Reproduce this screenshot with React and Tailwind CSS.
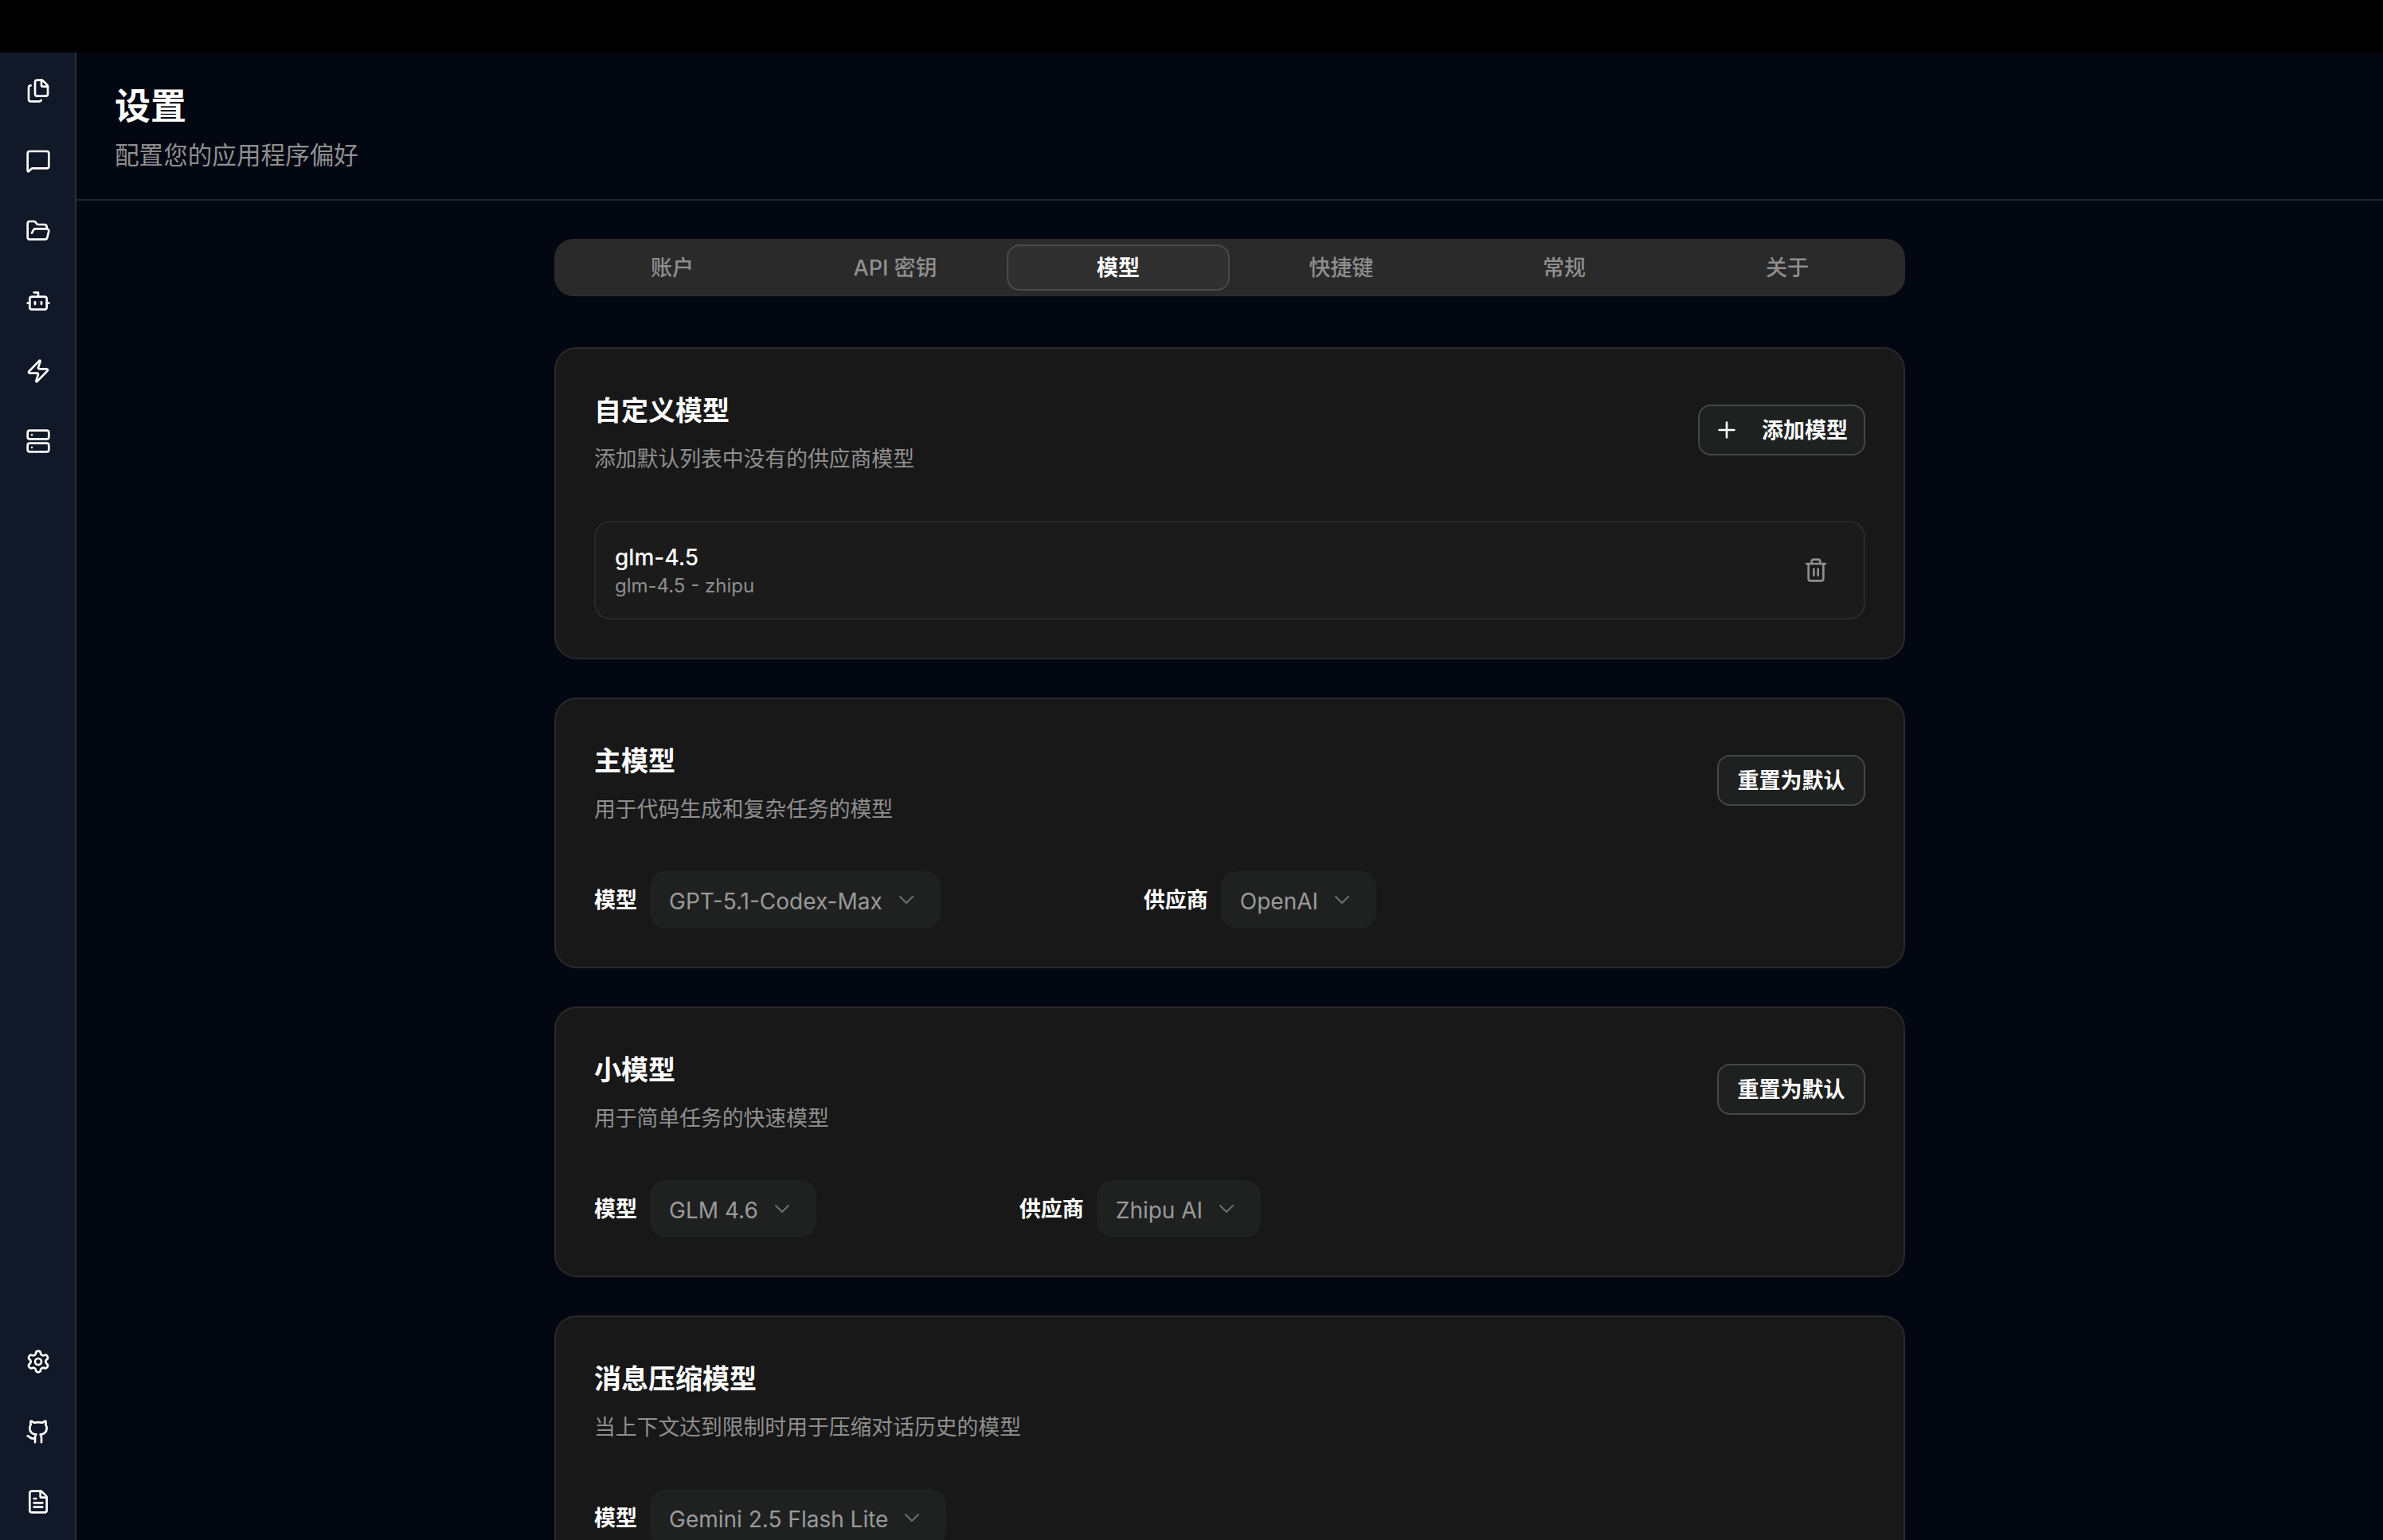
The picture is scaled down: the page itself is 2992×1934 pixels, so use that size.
import { Bot, ChevronDown, FileText, Files, FolderOpen, Github, MessageSquare, Plus, Server, Settings, Trash2, Zap } from 'lucide-react'

const topNav = [Files, MessageSquare, FolderOpen, Bot, Zap, Server]
const bottomNav = [Settings, Github, FileText]
const tabs = ['账户', 'API 密钥', '模型', '快捷键', '常规', '关于']

function NavIcon({ icon: Icon }) {
  return (
    <button className="flex h-[88px] w-full items-center justify-center text-white">
      <Icon size={32} />
    </button>
  )
}

function SelectBox({ value }) {
  return (
    <button className="flex h-[72px] items-center gap-[14px] rounded-[20px] bg-[#1f2121] pl-[24px] pr-[27px] text-[28px] text-[#9a9a9a]">
      <span className="pt-[3px]">{value}</span>
      <ChevronDown size={32} className="text-[#6f6f6f]" strokeWidth={1.5} />
    </button>
  )
}

function Field({ label, value }) {
  return (
    <div className="flex items-center gap-[16px]">
      <span className="pt-[3px] text-[27px] font-semibold text-white">{label}</span>
      <SelectBox value={value} />
    </div>
  )
}

function CardHeader({ title, desc, children }) {
  return (
    <div className="flex items-center justify-between">
      <div>
        <h2 className="pt-[4px] text-[34px] leading-[52px] font-semibold text-white">{title}</h2>
        <p className="mt-[12px] pt-[4px] text-[26.8px] leading-[36px] text-[#8f8f8f]">{desc}</p>
      </div>
      {children}
    </div>
  )
}

function ModelCard({ title, desc, model, provider, reset = true }) {
  return (
    <section className="rounded-[28px] border-2 border-[#2a2a2a] bg-[#181818] p-[48px]">
      <CardHeader title={title} desc={desc}>
        {reset && (
          <button className="h-[64px] w-[186px] rounded-[16px] border-2 border-[#454747] bg-[#1f2121] pt-[2px] text-[27px] font-semibold text-white">
            重置为默认
          </button>
        )}
      </CardHeader>
      <div className="mt-[60px] flex gap-[255px]">
        <Field label="模型" value={model} />
        {provider && <Field label="供应商" value={provider} />}
      </div>
    </section>
  )
}

export default function App() {
  return (
    <div className="flex h-[1934px] w-[2992px] flex-col overflow-hidden bg-black font-['Inter','Noto_Sans_CJK_SC',sans-serif]">
      <div className="h-[66px] shrink-0 bg-black" />
      <div className="flex min-h-0 flex-1">
        <aside className="flex w-[96px] shrink-0 flex-col justify-between border-r-2 border-[#2b2f36] bg-[#111827] py-[4px] pl-[2px]">
          <div>
            {topNav.map((icon, i) => <NavIcon key={i} icon={icon} />)}
          </div>
          <div>
            {bottomNav.map((icon, i) => <NavIcon key={i} icon={icon} />)}
          </div>
        </aside>

        <main className="min-w-0 flex-1 bg-[#030712]">
          <header className="border-b-2 border-[#23252b] px-[48px] pt-[34px] pb-[33px]">
            <h1 className="pt-[4px] text-[45px] leading-[60px] font-bold text-white">设置</h1>
            <p className="mt-[9px] text-[30.6px] leading-[44px] text-[#8f8f8f]">配置您的应用程序偏好</p>
          </header>

          <div className="mx-auto w-[1696px] pt-[48px]">
            {/* Tabs */}
            <div className="grid h-[72px] grid-cols-6 rounded-[24px] bg-[#2a2a2a] p-[7px_8px]">
              {tabs.map((tab) => (
                <div
                  key={tab}
                  className={
                    tab === '模型'
                      ? 'flex items-center justify-center rounded-[16px] border-2 border-[#4a4a4a] bg-[#303030] pt-[3px] text-[27px] font-semibold text-white'
                      : 'flex items-center justify-center pt-[3px] text-[27px] font-medium text-[#8f8f8f]'
                  }
                >
                  {tab}
                </div>
              ))}
            </div>

            <div className="mt-[64px] flex flex-col gap-[48px]">
              <section className="rounded-[28px] border-2 border-[#2a2a2a] bg-[#181818] p-[48px]">
                <CardHeader title="自定义模型" desc="添加默认列表中没有的供应商模型">
                  <button className="flex h-[64px] w-[210px] items-center gap-[28px] rounded-[16px] border-2 border-[#454747] bg-[#1f2121] pl-[18px] text-[27px] font-semibold text-white">
                    <Plus size={32} />
                    <span className="pt-[2px]">添加模型</span>
                  </button>
                </CardHeader>
                <div className="mt-[60px] flex items-center justify-between rounded-[20px] border-2 border-[#2a2a2a] bg-[#1b1b1b] py-[24px] pr-[44px] pl-[24px]">
                  <div>
                    <p className="text-[28px] leading-[40px] font-medium text-white">glm-4.5</p>
                    <p className="text-[24px] leading-[32px] text-[#8f8f8f]">glm-4.5 - zhipu</p>
                  </div>
                  <Trash2 size={32} className="text-[#8f8f8f]" />
                </div>
              </section>

              <ModelCard title="主模型" desc="用于代码生成和复杂任务的模型" model="GPT-5.1-Codex-Max" provider="OpenAI" />
              <ModelCard title="小模型" desc="用于简单任务的快速模型" model="GLM 4.6" provider="Zhipu AI" />
              <ModelCard title="消息压缩模型" desc="当上下文达到限制时用于压缩对话历史的模型" model="Gemini 2.5 Flash Lite" reset={false} />
            </div>
          </div>
        </main>
      </div>
    </div>
  )
}
